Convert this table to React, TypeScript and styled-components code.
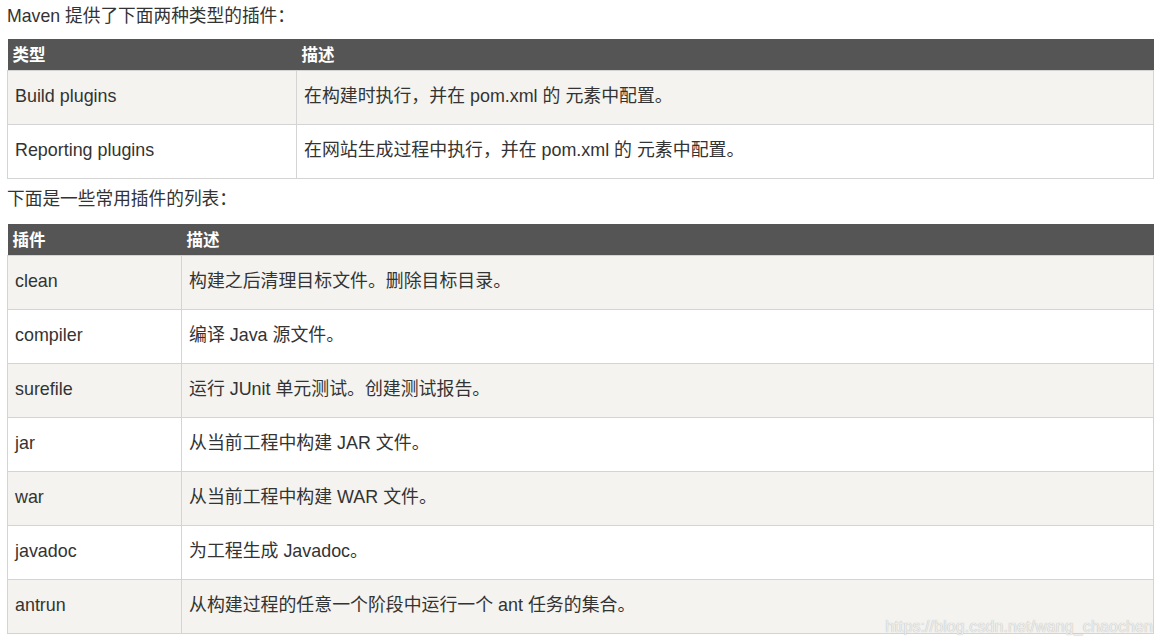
import React from 'react'
import styled, { createGlobalStyle } from 'styled-components'

const GlobalStyle = createGlobalStyle`
  body {
    margin: 0;
    background: #fff;
    font-family: "Liberation Sans", Arial, "Noto Sans CJK SC", sans-serif;
    color: #333;
  }
`

const Page = styled.div`
  position: relative;
  width: 1161px;
  height: 644px;
  padding: 0 7px;
  box-sizing: border-box;
  overflow: hidden;
`

const Intro = styled.p<{ $top: number; $bottom: number }>`
  margin: ${p => p.$top}px 0 ${p => p.$bottom}px;
  font-size: 17.7px;
  line-height: 24px;
  color: #333;
`

const Table = styled.table`
  width: 1147px;
  border-collapse: collapse;
  font-size: 17.9px;
  table-layout: fixed;
`

const HeadCell = styled.th<{ $width?: number }>`
  background: #555;
  color: #fff;
  font-weight: bold;
  font-size: 16.5px;
  text-align: left;
  height: 31px;
  padding: 1px 5px 0;
  line-height: 30px;
  box-sizing: border-box;
  width: ${p => (p.$width ? `${p.$width}px` : 'auto')};
`

const Row = styled.tr`
  &:nth-child(odd) {
    background: #f4f3ef;
  }
  &:nth-child(even) {
    background: #fff;
  }
`

const Cell = styled.td`
  border: 1px solid #d4d4d4;
  height: 50px;
  padding: 0 7px 3px;
  line-height: 24px;
  vertical-align: middle;
  color: #333;
`

const Watermark = styled.div`
  position: absolute;
  right: 8px;
  bottom: 8px;
  font-size: 16px;
  color: #eeeeee;
  text-shadow: 0 0 1px #a8a8a8;
  letter-spacing: 0.1px;
`

const types = [
  ['Build plugins', '在构建时执行，并在 pom.xml 的 元素中配置。'],
  ['Reporting plugins', '在网站生成过程中执行，并在 pom.xml 的 元素中配置。'],
]

const plugins = [
  ['clean', '构建之后清理目标文件。删除目标目录。'],
  ['compiler', '编译 Java 源文件。'],
  ['surefile', '运行 JUnit 单元测试。创建测试报告。'],
  ['jar', '从当前工程中构建 JAR 文件。'],
  ['war', '从当前工程中构建 WAR 文件。'],
  ['javadoc', '为工程生成 Javadoc。'],
  ['antrun', '从构建过程的任意一个阶段中运行一个 ant 任务的集合。'],
]

const App = () => {
  return (
    <Page>
      <GlobalStyle />
      <Intro $top={4} $bottom={11}>Maven 提供了下面两种类型的插件：</Intro>
      <Table>
        <thead>
          <tr>
            <HeadCell $width={289}>类型</HeadCell>
            <HeadCell>描述</HeadCell>
          </tr>
        </thead>
        <tbody>
          {types.map(([name, desc]) => (
            <Row key={name}>
              <Cell>{name}</Cell>
              <Cell>{desc}</Cell>
            </Row>
          ))}
        </tbody>
      </Table>
      <Intro $top={8} $bottom={13}>下面是一些常用插件的列表：</Intro>
      <Table>
        <thead>
          <tr>
            <HeadCell $width={174}>插件</HeadCell>
            <HeadCell>描述</HeadCell>
          </tr>
        </thead>
        <tbody>
          {plugins.map(([name, desc]) => (
            <Row key={name}>
              <Cell>{name}</Cell>
              <Cell>{desc}</Cell>
            </Row>
          ))}
        </tbody>
      </Table>
      <Watermark>https://blog.csdn.net/wang_chaochen</Watermark>
    </Page>
  )
}

export default App
